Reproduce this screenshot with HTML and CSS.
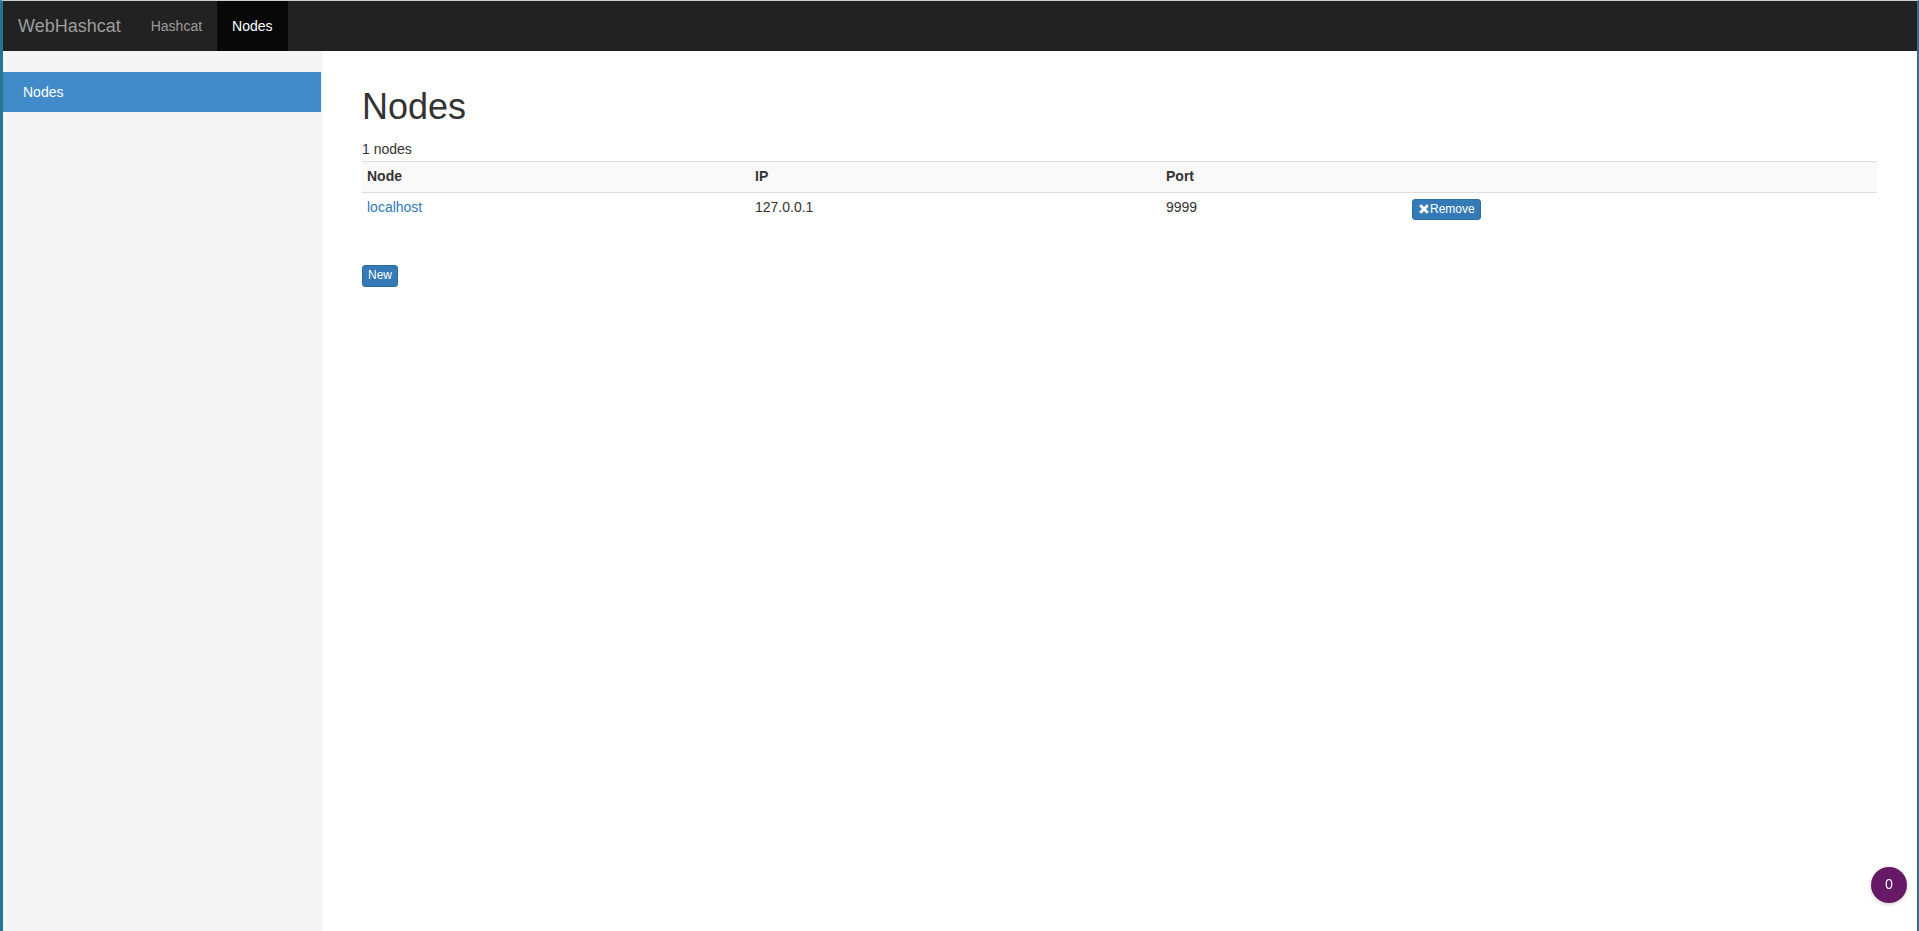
FILE: index.html
```html
<!DOCTYPE html>
<html lang="en">
<head>
  <meta charset="UTF-8">
  <title>WebHashcat - Nodes</title>
  <link rel="stylesheet" href="styles.css">
</head>
<body>
  <nav class="navbar">
    <a class="brand" href="#">WebHashcat</a>
    <a class="nav-link" href="#">Hashcat</a>
    <a class="nav-link active" href="#">Nodes</a>
  </nav>

  <div class="layout">
    <div class="sidebar">
      <a class="side-link active" href="#">Nodes</a>
    </div>

    <div class="main">
      <h1 class="page-title">Nodes</h1>
      <div class="count">1 nodes</div>

      <table class="nodes">
        <thead>
          <tr>
            <th class="col-node">Node</th>
            <th class="col-ip">IP</th>
            <th class="col-port">Port</th>
            <th class="col-action"></th>
          </tr>
        </thead>
        <tbody>
          <tr>
            <td><a href="#">localhost</a></td>
            <td>127.0.0.1</td>
            <td>9999</td>
            <td class="actions">
              <button class="btn btn-xs btn-remove"><svg class="icon-remove" viewBox="0 0 10 10" width="10" height="10"><path d="M1.2 1.2 L8.8 8.8 M8.8 1.2 L1.2 8.8" stroke="#fff" stroke-width="3"/></svg>Remove</button>
            </td>
          </tr>
        </tbody>
      </table>

      <div class="new-wrap">
        <button class="btn btn-xs">New</button>
      </div>
    </div>
  </div>

  <div class="notif-badge">0</div>
</body>
</html>
```

FILE: styles.css
```css
* {
  box-sizing: border-box;
}
html, body {
  height: 100%;
}
body {
  margin: 0;
  border-top: 1px solid #cfcfcf;
  border-left: 3px solid #277591;
  border-right: 2px solid #277591;
  display: flex;
  flex-direction: column;
  font-family: "Liberation Sans", Arial, sans-serif;
  font-size: 14px;
  line-height: 20px;
  color: #333;
  background: #fff;
}
a {
  text-decoration: none;
  color: #337ab7;
}

/* top bar */
.navbar {
  height: 50px;
  flex: none;
  display: flex;
  background-color: #222;
}
.brand {
  padding: 15px;
  font-size: 18px;
  line-height: 20px;
  color: #9d9d9d;
}
.nav-link {
  padding: 15px;
  color: #9d9d9d;
}
.nav-link.active {
  background-color: #080808;
  color: #fff;
}

/* sidebar + content */
.layout {
  flex: 1;
  display: flex;
  min-height: 0;
}
.sidebar {
  width: 319px;
  flex: none;
  padding-top: 21px;
  background-color: #f5f5f5;
  border-right: 1px solid #eee;
}
.side-link {
  display: block;
  padding: 10px 20px;
  color: #fff;
}
.side-link.active {
  background-color: #428bca;
}
.main {
  flex: 1;
  padding: 0 40px;
}
.page-title {
  margin: 36px 0 12px;
  font-size: 36px;
  font-weight: 500;
  line-height: 1.1;
}
.count {
  margin-bottom: 2px;
}

/* table */
.nodes {
  width: 100%;
  table-layout: fixed;
  border-collapse: collapse;
  border-top: 1px solid #ddd;
}
.nodes thead tr {
  background-color: #f9f9f9;
}
.nodes th {
  text-align: left;
  padding: 4px 5px 6px;
  border-bottom: 1px solid #ddd;
}
.nodes td {
  padding: 4px 5px 5px;
  vertical-align: top;
}
.nodes td.actions {
  padding-top: 5px;
}
.col-node { width: 388px; }
.col-ip { width: 411px; }
.col-port { width: 246px; }

.btn {
  display: inline-block;
  font-family: inherit;
  color: #fff;
  background-color: #337ab7;
  border: 1px solid #2e6da4;
  cursor: pointer;
}
.btn-xs {
  padding: 0 5px 2px;
  font-size: 12px;
  line-height: 18px;
  border-radius: 3px;
}
.btn-remove {
  padding-bottom: 1px;
}
.icon-remove {
  margin: 0 1px 0 1px;
  vertical-align: -1px;
}
.new-wrap {
  margin-top: 39px;
}

/* floating counter */
.notif-badge {
  position: fixed;
  right: 12px;
  bottom: 28px;
  width: 36px;
  height: 36px;
  border-radius: 50%;
  background-color: #661a66;
  color: #fff;
  font-family: "Open Sans", sans-serif;
  font-size: 14px;
  line-height: 34px;
  text-align: center;
  box-shadow: 0 1px 4px rgba(0, 0, 0, 0.2);
}
```
